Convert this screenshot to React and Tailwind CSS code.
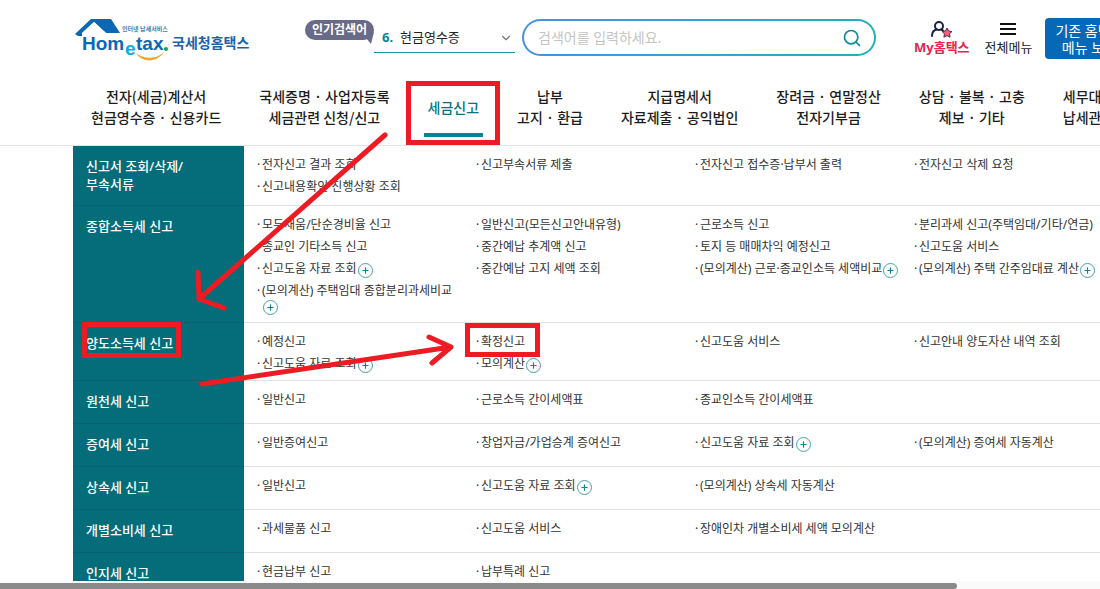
import { ChevronDown, Search, Plus } from 'lucide-react';

const navItems = [
  { lines: ['전자(세금)계산서', '현금영수증 · 신용카드'] },
  { lines: ['국세증명 · 사업자등록', '세금관련 신청/신고'] },
  { lines: ['세금신고'], active: true },
  { lines: ['납부', '고지 · 환급'] },
  { lines: ['지급명세서', '자료제출 · 공익법인'] },
  { lines: ['장려금 · 연말정산', '전자기부금'] },
  { lines: ['상담 · 불복 · 고충', '제보 · 기타'] },
  { lines: ['세무대리', '납세관리'] },
];

const menuRows = [
  {
    title: '신고서 조회/삭제/ 부속서류',
    columns: [
      [{ text: '전자신고 결과 조회' }, { text: '신고내용확인 진행상황 조회' }],
      [{ text: '신고부속서류 제출' }],
      [{ text: '전자신고 접수증·납부서 출력' }],
      [{ text: '전자신고 삭제 요청' }],
    ],
  },
  {
    title: '종합소득세 신고',
    columns: [
      [
        { text: '모두채움/단순경비율 신고' },
        { text: '종교인 기타소득 신고' },
        { text: '신고도움 자료 조회', plus: true },
        { text: '(모의계산) 주택임대 종합분리과세비교', plus: true },
      ],
      [{ text: '일반신고(모든신고안내유형)' }, { text: '중간예납 추계액 신고' }, { text: '중간예납 고지 세액 조회' }],
      [
        { text: '근로소득 신고' },
        { text: '토지 등 매매차익 예정신고' },
        { text: '(모의계산) 근로·종교인소득 세액비교', plus: true },
      ],
      [
        { text: '분리과세 신고(주택임대/기타/연금)' },
        { text: '신고도움 서비스' },
        { text: '(모의계산) 주택 간주임대료 계산', plus: true },
      ],
    ],
  },
  {
    title: '양도소득세 신고',
    columns: [
      [{ text: '예정신고' }, { text: '신고도움 자료 조회', plus: true }],
      [{ text: '확정신고' }, { text: '모의계산', plus: true }],
      [{ text: '신고도움 서비스' }],
      [{ text: '신고안내 양도자산 내역 조회' }],
    ],
  },
  {
    title: '원천세 신고',
    columns: [[{ text: '일반신고' }], [{ text: '근로소득 간이세액표' }], [{ text: '종교인소득 간이세액표' }], []],
  },
  {
    title: '증여세 신고',
    columns: [
      [{ text: '일반증여신고' }],
      [{ text: '창업자금/가업승계 증여신고' }],
      [{ text: '신고도움 자료 조회', plus: true }],
      [{ text: '(모의계산) 증여세 자동계산' }],
    ],
  },
  {
    title: '상속세 신고',
    columns: [
      [{ text: '일반신고' }],
      [{ text: '신고도움 자료 조회', plus: true }],
      [{ text: '(모의계산) 상속세 자동계산' }],
      [],
    ],
  },
  {
    title: '개별소비세 신고',
    columns: [[{ text: '과세물품 신고' }], [{ text: '신고도움 서비스' }], [{ text: '장애인차 개별소비세 세액 모의계산' }], []],
  },
  {
    title: '인지세 신고',
    columns: [[{ text: '현금납부 신고' }], [{ text: '납부특례 신고' }], [], []],
  },
];

function Logo() {
  return (
    <a href="#home" className="block shrink-0">
      <svg width="176" height="46" viewBox="0 0 176 46" role="img" aria-label="Hometax 국세청홈택스">
        <path d="M0 17 16 2h20l9 14H31L19 5 7 16v3H3z" fill="#0a68b4" />
        <path d="M7 16 19 5l12 11z" fill="#fff" />
        <text x="47" y="14" fontSize="6" fontWeight="700" fill="#3c7fb8">인터넷 납세서비스</text>
        <g fontFamily="'Liberation Sans', sans-serif" fontWeight="700">
          <text x="7" y="33" fontSize="19" fill="#0a68b4">Hom</text>
          <text x="50" y="38" fontSize="19" fill="#14a9dc">e</text>
          <text x="61" y="33" fontSize="19" fill="#0a68b4">tax</text>
        </g>
        <circle cx="91" cy="32" r="2" fill="#0fa04b" />
        <path d="M61 36c7 6 20 7 28-1-7 11-22 11-28 1z" fill="#f3a52b" />
        <text x="97" y="31" fontSize="14" fontWeight="700" fill="#1d62a8">국세청홈택스</text>
      </svg>
    </a>
  );
}

function Header() {
  return (
    <header className="flex h-[75px] items-start pl-[75px]">
      <div className="pt-[17px]">
        <Logo />
      </div>

      <div className="relative ml-[54px] mt-5 flex h-5 w-[69px] shrink-0 items-center justify-center rounded-full bg-[#686a87] text-xs font-bold text-white">
        인기검색어
        <svg className="absolute right-0 top-3 h-3 w-2" viewBox="0 0 8 12" aria-hidden="true">
          <path d="M0 6 8 0 5 12z" fill="#686a87" />
        </svg>
      </div>

      <div className="mt-6 flex h-[29px] w-[141px] shrink-0 items-center border-b border-[#1596a0] pl-2">
        <label htmlFor="popular" className="w-[18px] text-[13px] font-bold text-[#078690]">6.</label>
        <select id="popular" className="min-w-0 flex-1 appearance-none bg-transparent text-[13px] text-[#222] outline-none">
          <option>현금영수증</option>
        </select>
        <ChevronDown className="mr-[2px] size-[14px] text-[#777]" strokeWidth={2} />
      </div>

      <form className="ml-[7px] mt-[19px] w-[354px] shrink-0 rounded-full bg-gradient-to-r from-[#4a90e2] to-[#1fb0b8] p-[2px]">
        <div className="flex h-[33px] items-center rounded-full bg-white pl-[14px] pr-[12px]">
          <input
            type="text"
            aria-label="검색어"
            placeholder="검색어를 입력하세요."
            className="min-w-0 flex-1 text-sm outline-none placeholder:text-[#c4c4c4]"
          />
          <button type="button" aria-label="검색">
            <Search className="size-5 text-[#0d8c98]" strokeWidth={2} />
          </button>
        </div>
      </form>

      <a href="#my" className="ml-[38px] mt-5 flex shrink-0 flex-col items-center text-[13px] font-bold leading-[18px] text-[#e6254f]">
        <svg width="22" height="18" viewBox="0 0 22 18" fill="none" aria-hidden="true">
          <circle cx="8" cy="6" r="4" stroke="#1b2340" strokeWidth="2" />
          <path d="M1 16c0-4 2-6 5-6.500M10 9.500l2 1" stroke="#1b2340" strokeWidth="2" strokeLinecap="round" />
          <path d="m16 8 1.500 3 3.500.5-2.500 2.300.6 3.400-3.100-1.600-3.100 1.600.6-3.400L11 11.500l3.500-.5z" fill="#ff5d7d" stroke="#4b2b40" />
        </svg>
        My홈택스
      </a>

      <button type="button" className="ml-[15px] mt-5 flex shrink-0 flex-col items-center text-[13px] leading-[18px] text-[#222]">
        <svg width="18" height="18" viewBox="0 0 18 18" aria-hidden="true">
          <path d="M1 4h16M1 9h16M1 14h16" stroke="#111" strokeWidth="2" />
        </svg>
        전체메뉴
      </button>

      <button type="button" className="ml-[13px] mt-[18px] h-[41px] w-[88px] shrink-0 rounded bg-[#0668b6] text-sm leading-[17px] text-white">
        기존 홈택스
        <br />
        메뉴 보기
      </button>
    </header>
  );
}

function Nav() {
  return (
    <nav className="border-b border-[#e4e4e4] pl-[91px] font-['Noto_Sans_CJK_KR',sans-serif]">
      <ul className="flex h-[70px] gap-[38px] pb-[6px]">
        {navItems.map((item) => (
          <li key={item.lines[0]} className="relative flex shrink-0 items-center">
            <a
              href="#menu"
              className={
                item.active
                  ? 'text-center text-sm font-medium leading-[21px] text-[#08727e]'
                  : 'text-center text-sm font-medium leading-[21px] text-[#1c1c1c]'
              }
            >
              {item.lines.map((line) => (
                <span key={line} className="block whitespace-nowrap">{line}</span>
              ))}
            </a>
            {item.active && <span className="absolute -inset-x-1 bottom-[2px] h-1 bg-[#038591]" />}
          </li>
        ))}
      </ul>
    </nav>
  );
}

function MenuItem({ text, plus }) {
  return (
    <li className="flex py-[2px]">
      <span className="w-[5px] shrink-0">·</span>
      <div className="flex flex-wrap items-end">
        <a href="#page" className="whitespace-nowrap">{text}</a>
        {plus && (
          <button
            type="button"
            aria-label={`${text} 더보기`}
            className="ml-[1px] flex size-[15px] items-center justify-center rounded-full border border-[#4ba0a9] text-[#0d8791]"
          >
            <Plus className="size-[9px]" strokeWidth={3} />
          </button>
        )}
      </div>
    </li>
  );
}

function MegaMenu() {
  return (
    <div className="px-[73px]">
      {menuRows.map((row) => (
        <section key={row.title} className="flex min-h-[43px]">
          <h2 className="w-[171px] shrink-0 break-keep border-b border-[#0a606b] bg-[#046d79] pb-3 pl-[13px] pr-11 pt-[11px] text-[13px] font-medium leading-[18px] text-white">
            {row.title}
          </h2>
          <div className="grid flex-1 grid-cols-4 border-b border-[#e0e0e0] pb-[5px] pl-[13px] pr-[58px] pt-2">
            {row.columns.map((items, i) => (
              <ul key={i} className="pr-2 text-xs leading-[18px] text-[#333]">
                {items.map((item) => (
                  <MenuItem key={item.text} {...item} />
                ))}
              </ul>
            ))}
          </div>
        </section>
      ))}
    </div>
  );
}

// hand drawn guide: boxes and arrows over the menu
function Marks() {
  return (
    <svg className="pointer-events-none absolute left-0 top-0" width="560" height="400" fill="none" stroke="#ed1c24" aria-hidden="true">
      <g strokeWidth="5">
        <rect x="408.500" y="83.500" width="89" height="59" />
        <rect x="84.500" y="324.500" width="94" height="31" />
        <rect x="467.500" y="325.500" width="70" height="29" />
      </g>
      <g strokeWidth="5" strokeLinecap="round" strokeLinejoin="round">
        <path d="M385 135 199 299M198 272l1 27 25 9" />
        <path d="M202 384 451 347M429 337l22 10-19 16" />
      </g>
    </svg>
  );
}

export default function App() {
  return (
    <div className="flex h-screen flex-col bg-white font-['Noto_Sans','Noto_Sans_CJK_KR',sans-serif]">
      <main className="relative min-h-0 flex-1 overflow-hidden">
        <div className="min-w-[1264px]">
          <Header />
          <Nav />
          <MegaMenu />
        </div>
        <Marks />
      </main>
      <div className="h-2 shrink-0 bg-[#fafafa] pt-[2px]">
        <div className="h-full w-[87%] rounded-r-full bg-[#8a8a8a]" />
      </div>
    </div>
  );
}
